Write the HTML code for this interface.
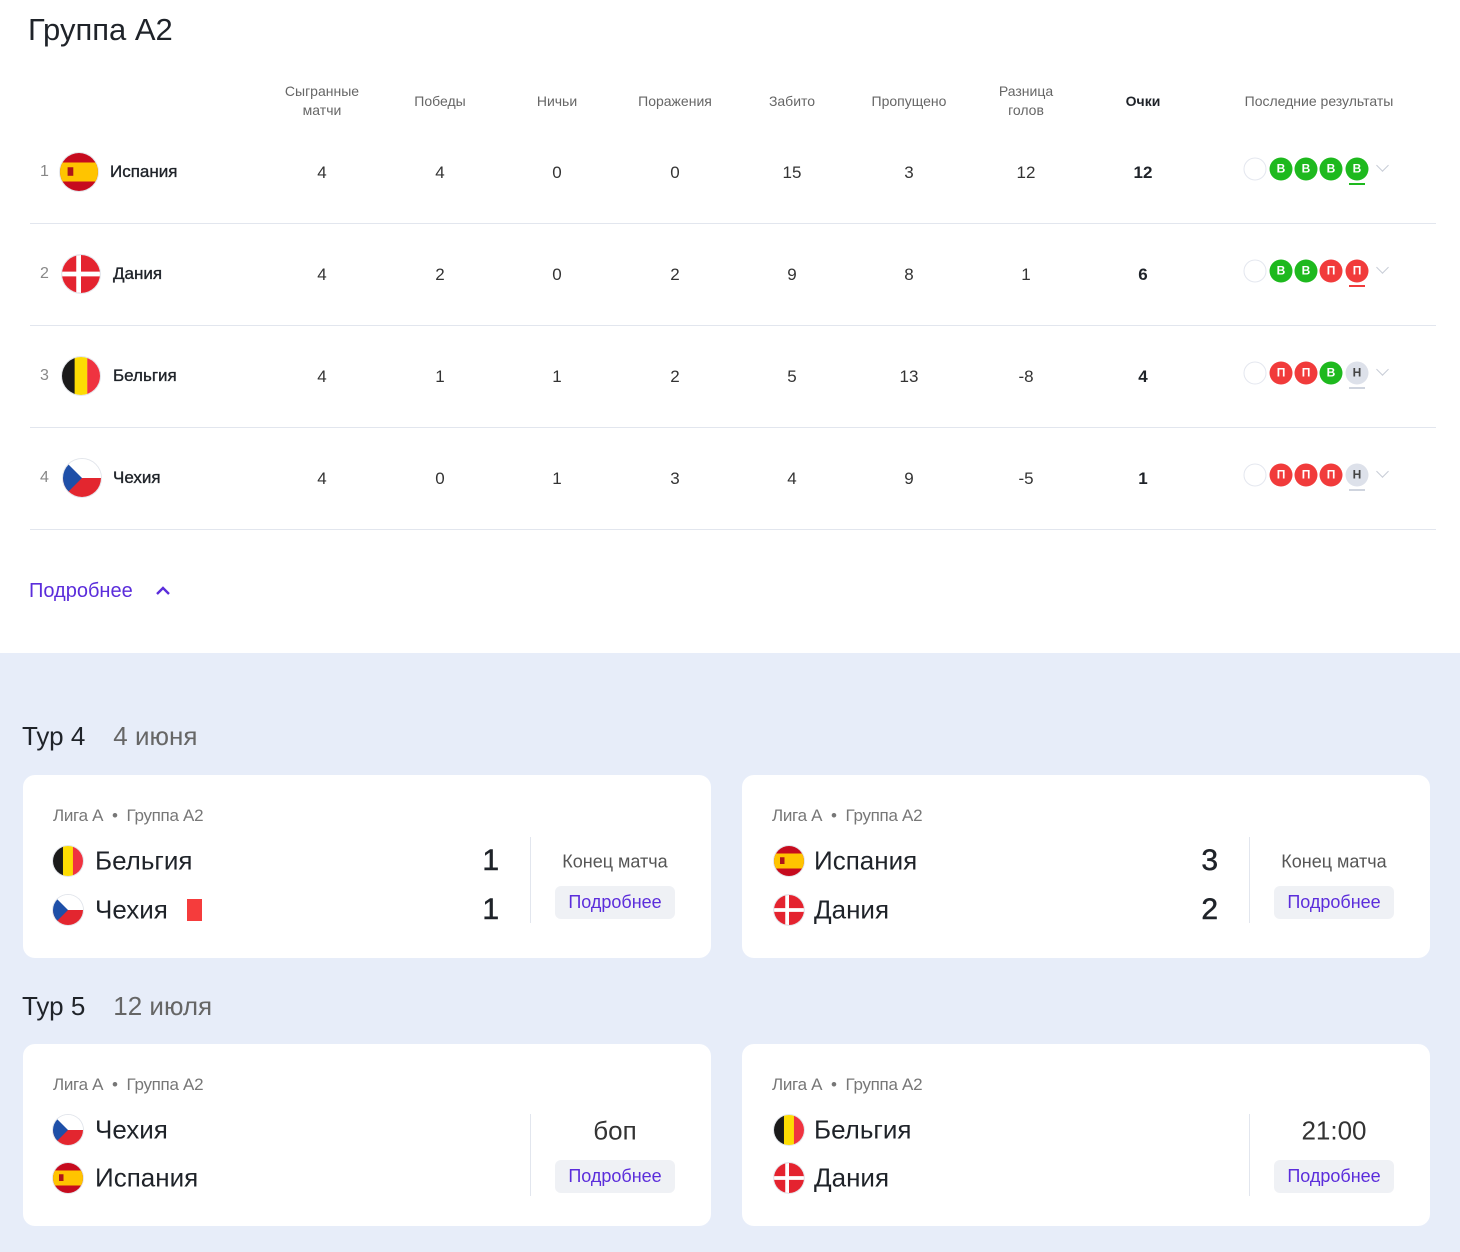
<!DOCTYPE html>
<html><head><meta charset="utf-8"><style>
*{margin:0;padding:0;box-sizing:border-box}
body{width:1460px;height:1252px;position:relative;overflow:hidden;background:#fff;font-family:"Liberation Sans",sans-serif;color:#1f2329}
.a{position:absolute}
.h{position:absolute;font-size:14px;color:#666;text-align:center;line-height:19px;width:120px;transform:translateX(-60px)}
.n{position:absolute;font-size:17px;color:#333;width:60px;text-align:center;transform:translate(-30px,-50%)}
.rk{position:absolute;font-size:16px;color:#888;transform:translateY(-50%)}
.nm{position:absolute;font-size:17px;color:#1f2329;transform:translateY(-50%);-webkit-text-stroke:.35px #1f2329}
.fl{position:absolute;border-radius:50%;overflow:hidden;box-shadow:0 0 0 1px #e3e6ec}
.fl svg{display:block;width:100%;height:100%}
.ln{position:absolute;left:30px;width:1406px;height:1px;background:#e2e6ee}
.b{position:absolute;width:23px;height:23px;border-radius:50%;color:#fff;font-size:12px;font-weight:bold;text-align:center;line-height:23px;transform:translate(-50%,-50%)}
.g{background:#1eb91e}.r{background:#f13b3b}.d{background:#dde1ea;color:#444}
.e{background:#fff;border:1.5px solid #e4e7ef}
.ul{position:absolute;width:16px;height:2px;transform:translateX(-50%)}
.chev{position:absolute;width:9px;height:9px;border-right:1.5px solid #c8ccd6;border-bottom:1.5px solid #c8ccd6;transform:rotate(45deg)}
.low{position:absolute;left:0;top:653px;width:1460px;height:599px;background:#e7edf9}
.card{position:absolute;width:688px;background:#fff;border-radius:12px}
.lg{position:absolute;left:30px;top:31px;font-size:17px;color:#777;letter-spacing:-.3px}
.tn{position:absolute;left:72px;font-size:26px;color:#1f2329;transform:translateY(-50%)}
.sc{position:absolute;right:212px;font-size:30px;color:#1f2329;transform:translateY(-50%);-webkit-text-stroke:.5px #1f2329}
.dv{position:absolute;left:507px;width:1px;background:#e2e6ee}
.st{position:absolute;left:532px;width:120px;text-align:center;transform:translateY(-50%)}
.btn{position:absolute;left:532px;width:120px;height:33px;border-radius:6px;background:#eff1f5;color:#5b2ddb;font-size:18px;text-align:center;line-height:33px}
.tour{position:absolute;left:22px;font-size:26px;color:#1f2329}
.tour span{color:#666;margin-left:28px}
</style></head><body>

<div class="a" style="left:28px;top:12px;font-size:31px;color:#1f2329">Группа А2</div>

<div class="h" style="left:322px;top:82px">Сыгранные<br>матчи</div>
<div class="h" style="left:440px;top:92px">Победы</div>
<div class="h" style="left:557px;top:92px">Ничьи</div>
<div class="h" style="left:675px;top:92px">Поражения</div>
<div class="h" style="left:792px;top:92px">Забито</div>
<div class="h" style="left:909px;top:92px">Пропущено</div>
<div class="h" style="left:1026px;top:82px">Разница<br>голов</div>
<div class="h" style="left:1143px;top:92px;color:#1f2329;font-weight:bold">Очки</div>
<div class="h" style="left:1319px;top:92px;width:200px;transform:translateX(-100px)">Последние результаты</div>

<!-- row 1 -->
<div class="rk" style="left:40px;top:172px">1</div>
<div class="fl" style="left:60px;top:153px;width:38px;height:38px"><svg viewBox="0 0 40 40"><rect width="40" height="40" fill="#c60b1e"/><rect y="10" width="40" height="20" fill="#ffc400"/><rect x="8" y="15" width="6" height="9" fill="#ad1519"/></svg></div>
<div class="nm" style="left:110px;top:172px">Испания</div>
<div class="n" style="left:322px;top:173px">4</div><div class="n" style="left:440px;top:173px">4</div><div class="n" style="left:557px;top:173px">0</div><div class="n" style="left:675px;top:173px">0</div><div class="n" style="left:792px;top:173px">15</div><div class="n" style="left:909px;top:173px">3</div><div class="n" style="left:1026px;top:173px">12</div><div class="n" style="left:1143px;top:173px;font-weight:bold;color:#1f2329">12</div>
<div class="b e" style="left:1255px;top:169px"></div><div class="b g" style="left:1281px;top:169px">В</div><div class="b g" style="left:1306px;top:169px">В</div><div class="b g" style="left:1331px;top:169px">В</div><div class="b g" style="left:1357px;top:169px">В</div>
<div class="ul" style="left:1357px;top:183px;background:#1eb91e"></div>
<div class="chev" style="left:1378px;top:161px"></div>
<div class="ln" style="top:223px"></div>

<!-- row 2 -->
<div class="rk" style="left:40px;top:274px">2</div>
<div class="fl" style="left:62px;top:255px;width:38px;height:38px"><svg viewBox="0 0 40 40"><rect width="40" height="40" fill="#e4232f"/><rect x="15" width="5" height="40" fill="#fff"/><rect y="17.5" width="40" height="5" fill="#fff"/></svg></div>
<div class="nm" style="left:113px;top:274px">Дания</div>
<div class="n" style="left:322px;top:275px">4</div><div class="n" style="left:440px;top:275px">2</div><div class="n" style="left:557px;top:275px">0</div><div class="n" style="left:675px;top:275px">2</div><div class="n" style="left:792px;top:275px">9</div><div class="n" style="left:909px;top:275px">8</div><div class="n" style="left:1026px;top:275px">1</div><div class="n" style="left:1143px;top:275px;font-weight:bold;color:#1f2329">6</div>
<div class="b e" style="left:1255px;top:271px"></div><div class="b g" style="left:1281px;top:271px">В</div><div class="b g" style="left:1306px;top:271px">В</div><div class="b r" style="left:1331px;top:271px">П</div><div class="b r" style="left:1357px;top:271px">П</div>
<div class="ul" style="left:1357px;top:285px;background:#f13b3b"></div>
<div class="chev" style="left:1378px;top:263px"></div>
<div class="ln" style="top:325px"></div>

<!-- row 3 -->
<div class="rk" style="left:40px;top:376px">3</div>
<div class="fl" style="left:62px;top:357px;width:38px;height:38px"><svg viewBox="0 0 40 40"><rect width="14" height="40" fill="#1a1a1a"/><rect x="13.3" width="13.4" height="40" fill="#fddc03"/><rect x="26.6" width="13.4" height="40" fill="#ef3340"/></svg></div>
<div class="nm" style="left:113px;top:376px">Бельгия</div>
<div class="n" style="left:322px;top:377px">4</div><div class="n" style="left:440px;top:377px">1</div><div class="n" style="left:557px;top:377px">1</div><div class="n" style="left:675px;top:377px">2</div><div class="n" style="left:792px;top:377px">5</div><div class="n" style="left:909px;top:377px">13</div><div class="n" style="left:1026px;top:377px">-8</div><div class="n" style="left:1143px;top:377px;font-weight:bold;color:#1f2329">4</div>
<div class="b e" style="left:1255px;top:373px"></div><div class="b r" style="left:1281px;top:373px">П</div><div class="b r" style="left:1306px;top:373px">П</div><div class="b g" style="left:1331px;top:373px">В</div><div class="b d" style="left:1357px;top:373px">Н</div>
<div class="ul" style="left:1357px;top:387px;background:#cfd4de"></div>
<div class="chev" style="left:1378px;top:365px"></div>
<div class="ln" style="top:427px"></div>

<!-- row 4 -->
<div class="rk" style="left:40px;top:478px">4</div>
<div class="fl" style="left:63px;top:459px;width:38px;height:38px"><svg viewBox="0 0 40 40"><rect width="40" height="20" fill="#fff"/><rect y="20" width="40" height="20" fill="#e3262f"/><polygon points="0,0 20,20 0,40" fill="#1e4fa8"/></svg></div>
<div class="nm" style="left:113px;top:478px">Чехия</div>
<div class="n" style="left:322px;top:479px">4</div><div class="n" style="left:440px;top:479px">0</div><div class="n" style="left:557px;top:479px">1</div><div class="n" style="left:675px;top:479px">3</div><div class="n" style="left:792px;top:479px">4</div><div class="n" style="left:909px;top:479px">9</div><div class="n" style="left:1026px;top:479px">-5</div><div class="n" style="left:1143px;top:479px;font-weight:bold;color:#1f2329">1</div>
<div class="b e" style="left:1255px;top:475px"></div><div class="b r" style="left:1281px;top:475px">П</div><div class="b r" style="left:1306px;top:475px">П</div><div class="b r" style="left:1331px;top:475px">П</div><div class="b d" style="left:1357px;top:475px">Н</div>
<div class="ul" style="left:1357px;top:489px;background:#cfd4de"></div>
<div class="chev" style="left:1378px;top:467px"></div>
<div class="ln" style="top:529px"></div>

<div class="a" style="left:29px;top:580px;font-size:20px;color:#5b2ddb">Подробнее</div>
<svg class="a" style="left:155px;top:585px" width="16" height="12" viewBox="0 0 16 12"><path d="M2 9 L8 3 L14 9" fill="none" stroke="#5b2ddb" stroke-width="2.4"/></svg>

<div class="low"></div>

<div class="tour" style="top:721px">Тур 4<span>4 июня</span></div>
<div class="tour" style="top:991px">Тур 5<span>12 июля</span></div>

<!-- card 1 -->
<div class="card" style="left:23px;top:775px;height:183px">
 <div class="lg">Лига А &nbsp;•&nbsp; Группа А2</div>
 <div class="fl" style="left:30px;top:71px;width:30px;height:30px"><svg viewBox="0 0 40 40"><rect width="14" height="40" fill="#1a1a1a"/><rect x="13.3" width="13.4" height="40" fill="#fddc03"/><rect x="26.6" width="13.4" height="40" fill="#ef3340"/></svg></div>
 <div class="tn" style="top:86px">Бельгия</div>
 <div class="sc" style="top:86px">1</div>
 <div class="fl" style="left:30px;top:120px;width:30px;height:30px"><svg viewBox="0 0 40 40"><rect width="40" height="20" fill="#fff"/><rect y="20" width="40" height="20" fill="#e3262f"/><polygon points="0,0 20,20 0,40" fill="#1e4fa8"/></svg></div>
 <div class="tn" style="top:135px">Чехия</div>
 <div class="a" style="left:164px;top:124px;width:15px;height:22px;background:#f53c3c"></div>
 <div class="sc" style="top:135px">1</div>
 <div class="dv" style="top:62px;height:86px"></div>
 <div class="st" style="top:87px;font-size:18px;color:#555">Конец матча</div>
 <div class="btn" style="top:111px">Подробнее</div>
</div>

<!-- card 2 -->
<div class="card" style="left:742px;top:775px;height:183px">
 <div class="lg">Лига А &nbsp;•&nbsp; Группа А2</div>
 <div class="fl" style="left:32px;top:71px;width:30px;height:30px"><svg viewBox="0 0 40 40"><rect width="40" height="40" fill="#c60b1e"/><rect y="10" width="40" height="20" fill="#ffc400"/><rect x="8" y="15" width="6" height="9" fill="#ad1519"/></svg></div>
 <div class="tn" style="top:86px">Испания</div>
 <div class="sc" style="top:86px">3</div>
 <div class="fl" style="left:32px;top:120px;width:30px;height:30px"><svg viewBox="0 0 40 40"><rect width="40" height="40" fill="#e4232f"/><rect x="15" width="5" height="40" fill="#fff"/><rect y="17.5" width="40" height="5" fill="#fff"/></svg></div>
 <div class="tn" style="top:135px">Дания</div>
 <div class="sc" style="top:135px">2</div>
 <div class="dv" style="top:62px;height:86px"></div>
 <div class="st" style="top:87px;font-size:18px;color:#555">Конец матча</div>
 <div class="btn" style="top:111px">Подробнее</div>
</div>

<!-- card 3 -->
<div class="card" style="left:23px;top:1044px;height:182px">
 <div class="lg">Лига А &nbsp;•&nbsp; Группа А2</div>
 <div class="fl" style="left:30px;top:71px;width:30px;height:30px"><svg viewBox="0 0 40 40"><rect width="40" height="20" fill="#fff"/><rect y="20" width="40" height="20" fill="#e3262f"/><polygon points="0,0 20,20 0,40" fill="#1e4fa8"/></svg></div>
 <div class="tn" style="top:86px">Чехия</div>
 <div class="fl" style="left:30px;top:119px;width:30px;height:30px"><svg viewBox="0 0 40 40"><rect width="40" height="40" fill="#c60b1e"/><rect y="10" width="40" height="20" fill="#ffc400"/><rect x="8" y="15" width="6" height="9" fill="#ad1519"/></svg></div>
 <div class="tn" style="top:134px">Испания</div>
 <div class="dv" style="top:70px;height:82px"></div>
 <div class="st" style="top:87px;font-size:26px;color:#333">боп</div>
 <div class="btn" style="top:116px">Подробнее</div>
</div>

<!-- card 4 -->
<div class="card" style="left:742px;top:1044px;height:182px">
 <div class="lg">Лига А &nbsp;•&nbsp; Группа А2</div>
 <div class="fl" style="left:32px;top:71px;width:30px;height:30px"><svg viewBox="0 0 40 40"><rect width="14" height="40" fill="#1a1a1a"/><rect x="13.3" width="13.4" height="40" fill="#fddc03"/><rect x="26.6" width="13.4" height="40" fill="#ef3340"/></svg></div>
 <div class="tn" style="top:86px">Бельгия</div>
 <div class="fl" style="left:32px;top:119px;width:30px;height:30px"><svg viewBox="0 0 40 40"><rect width="40" height="40" fill="#e4232f"/><rect x="15" width="5" height="40" fill="#fff"/><rect y="17.5" width="40" height="5" fill="#fff"/></svg></div>
 <div class="tn" style="top:134px">Дания</div>
 <div class="dv" style="top:70px;height:82px"></div>
 <div class="st" style="top:87px;font-size:26px;color:#333">21:00</div>
 <div class="btn" style="top:116px">Подробнее</div>
</div>

</body></html>
